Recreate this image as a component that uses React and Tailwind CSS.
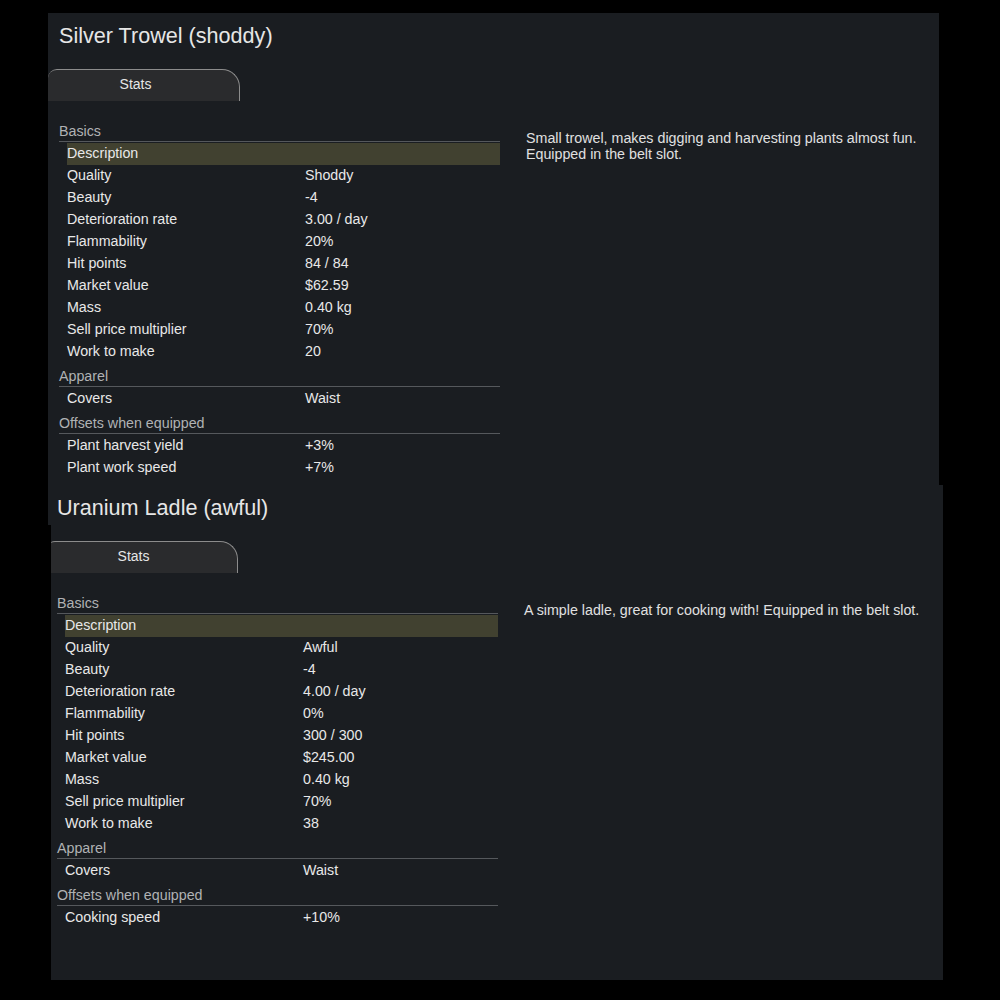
import React from "react";

const FONT = { fontFamily: '"Liberation Sans", Arial, sans-serif' };

function Heading({ children }) {
  return (
    <div className="h-[25px] w-[441px] shrink-0">
      <div className="h-[24px] border-b border-[#55585c] text-[14.25px] leading-[20px] text-[#b0b2b4] pt-[3px]">
        {children}
      </div>
    </div>
  );
}

function Row({ label, value, highlight }) {
  return (
    <div
      className={
        highlight
          ? "flex h-[22px] w-[433px] ml-[8px] items-center pb-[1px] bg-[#414130] text-[14.25px] text-[#e8e8e8]"
          : "flex h-[22px] w-[433px] ml-[8px] items-center pb-[1px] text-[14.25px] text-[#e8e8e8]"
      }
    >
      <div className="w-[238px] shrink-0">{label}</div>
      <div>{value}</div>
    </div>
  );
}

function PanelContent({ item }) {
  return (
    <div className="flex flex-col">
      <div className="h-[56px] pl-[11px] pt-[8px] text-[21.6px] leading-[30px] text-[#e6e6e6]">
        {item.title}
      </div>
      <div className="h-[32px] w-[192px] rounded-tl-[9px] rounded-tr-[18px] border-t border-r border-[#8c8c8c] bg-[#2a2b2d] flex items-center justify-center text-[14px] text-[#e6e6e6] pb-[2px] pr-[16px]">
        Stats
      </div>
      <div className="flex pt-[17px]">
        <div className="pl-[11px] w-[467px] shrink-0 flex flex-col">
          <Heading>Basics</Heading>
          <Row label="Description" value="" highlight />
          {item.basics.map(([l, v]) => (
            <Row key={l} label={l} value={v} />
          ))}
          <Heading>Apparel</Heading>
          <Row label="Covers" value="Waist" />
          <Heading>Offsets when equipped</Heading>
          {item.offsets.map(([l, v]) => (
            <Row key={l} label={l} value={v} />
          ))}
        </div>
        <div className="pt-[12px] pl-[11px] w-[420px] text-[14.25px] leading-[16px] text-[#e0e0e0]">
          {item.desc}
        </div>
      </div>
    </div>
  );
}

const trowel = {
  title: "Silver Trowel (shoddy)",
  basics: [
    ["Quality", "Shoddy"],
    ["Beauty", "-4"],
    ["Deterioration rate", "3.00 / day"],
    ["Flammability", "20%"],
    ["Hit points", "84 / 84"],
    ["Market value", "$62.59"],
    ["Mass", "0.40 kg"],
    ["Sell price multiplier", "70%"],
    ["Work to make", "20"],
  ],
  offsets: [
    ["Plant harvest yield", "+3%"],
    ["Plant work speed", "+7%"],
  ],
  desc: (
    <>
      Small trowel, makes digging and harvesting plants almost fun.
      <br />
      Equipped in the belt slot.
    </>
  ),
};

const ladle = {
  title: "Uranium Ladle (awful)",
  basics: [
    ["Quality", "Awful"],
    ["Beauty", "-4"],
    ["Deterioration rate", "4.00 / day"],
    ["Flammability", "0%"],
    ["Hit points", "300 / 300"],
    ["Market value", "$245.00"],
    ["Mass", "0.40 kg"],
    ["Sell price multiplier", "70%"],
    ["Work to make", "38"],
  ],
  offsets: [["Cooking speed", "+10%"]],
  desc: "A simple ladle, great for cooking with! Equipped in the belt slot.",
};

export default function App() {
  return (
    <div className="w-[1000px] h-[1000px] bg-black overflow-hidden pt-[13px]" style={FONT}>
      <div className="ml-[48px] w-[891px] h-[512px] bg-[#1a1d21] overflow-hidden">
        <PanelContent item={trowel} />
      </div>
      <div className="relative ml-[51px] mt-[-40px] w-[892px] h-[495px] bg-[#1a1d21] overflow-hidden">
        <div className="ml-[-5px]">
          <PanelContent item={ladle} />
        </div>
      </div>
    </div>
  );
}
